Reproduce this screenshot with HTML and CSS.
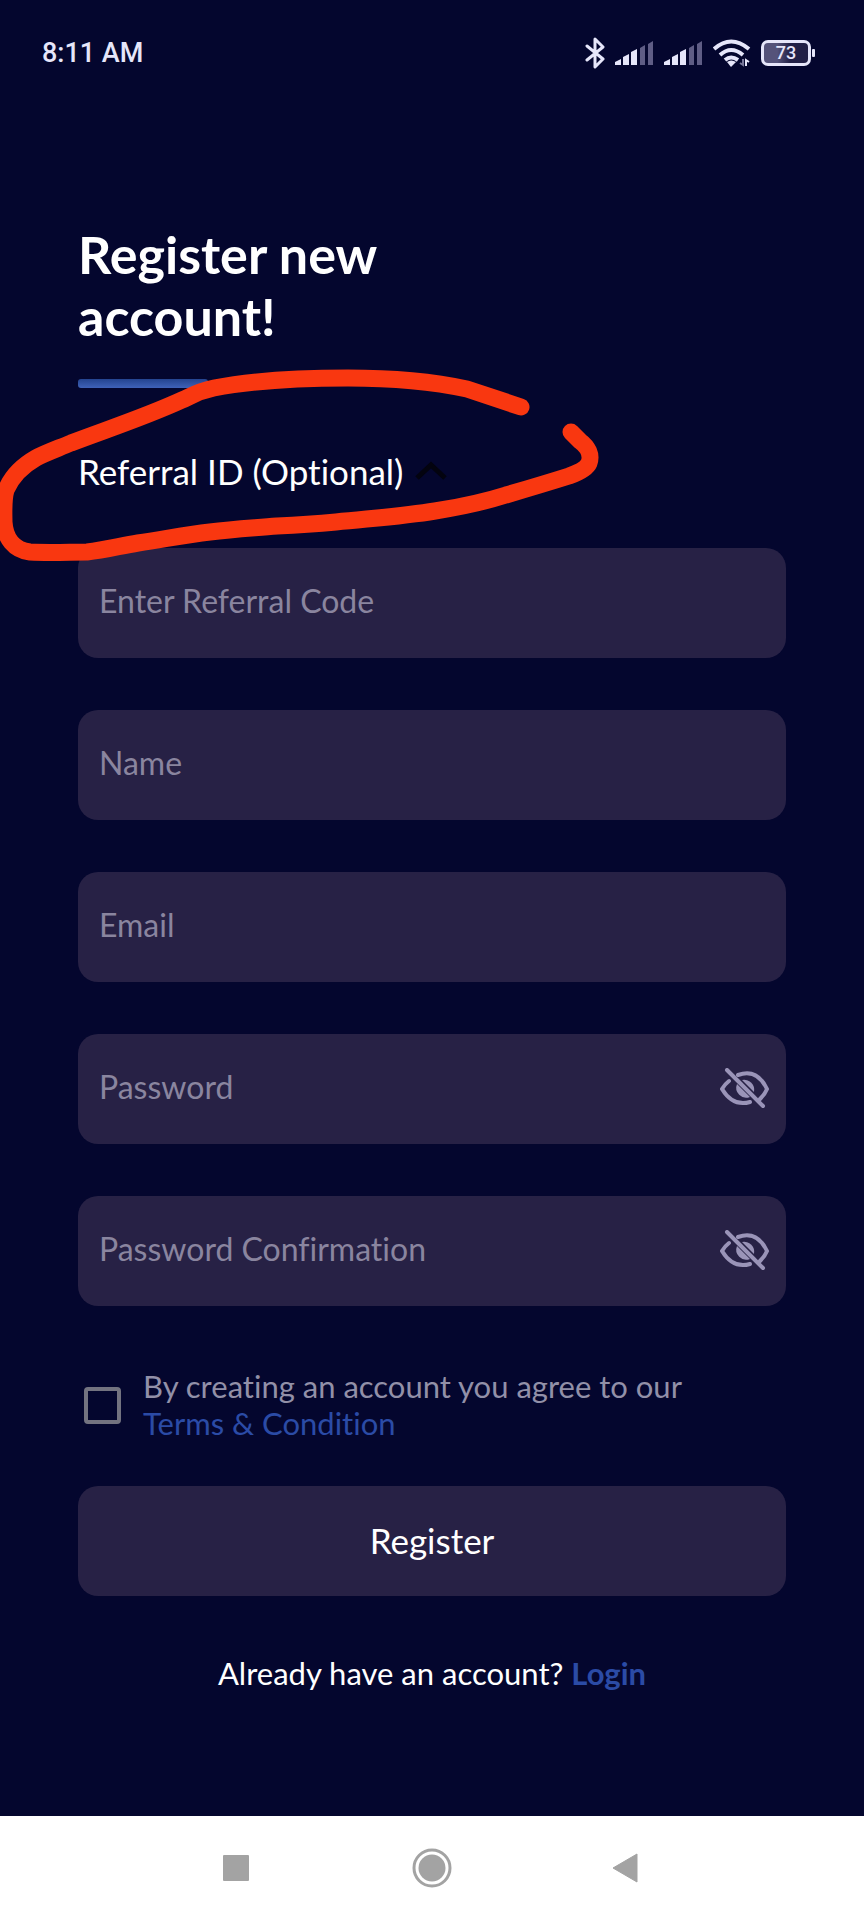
FILE: index.html
```html
<!DOCTYPE html>
<html lang="en">
<head>
    <meta charset="UTF-8">
    <meta name="viewport" content="width=device-width, initial-scale=1.0">
    <title>Register new account</title>
    <link rel="stylesheet" href="styles.css">
</head>
<body>
    <header class="status-bar">
        <span class="time">8:11 AM</span>
        <div class="status-icons">
            <svg width="20" height="32" viewBox="0 0 20 32" fill="none" stroke="#e6e6fa" stroke-width="3" stroke-linejoin="round" stroke-linecap="round">
                <path d="M2 9 L18 22 L10 30 V2 L18 10 L2 23"/>
            </svg>
            <svg width="39" height="26" viewBox="0 0 39 26" fill="#e6e6fa">
                <path d="M0 25 V22 L6 19 V25 Z"/>
                <path d="M8 25 V17 L14 14 V25 Z"/>
                <path d="M16 25 V12 L22 9 V25 Z"/>
                <path class="signal-off" d="M25 25 V8 L30 5 V25 Z M33 25 V4 L38 1 V25 Z"/>
            </svg>
            <svg width="39" height="26" viewBox="0 0 39 26" fill="#e6e6fa">
                <path d="M0 25 V22 L6 19 V25 Z"/>
                <path d="M8 25 V17 L14 14 V25 Z"/>
                <path d="M16 25 V12 L22 9 V25 Z"/>
                <path class="signal-off" d="M25 25 V8 L30 5 V25 Z M33 25 V4 L38 1 V25 Z"/>
            </svg>
            <svg width="38" height="28" viewBox="0 0 38 28" fill="none" stroke="#e6e6fa" stroke-width="4">
                <path d="M1 10 Q18 -5 36 10"/>
                <path d="M7 16 Q18 6 30 16"/>
                <path d="M12 21 Q18 16 25 21"/>
                <path d="M14 23 Q18 20 23 23 L18 28 Z" fill="#e6e6fa" stroke="none"/>
                <path d="M30 20 V26 L27 24" stroke="#77779a" stroke-width="2"/>
                <path d="M33 27 V21 L36 23" stroke-width="2"/>
            </svg>
            <div class="battery"><span>73</span></div>
        </div>
    </header>

    <main class="content">
        <h1>Register new account!</h1>
        <div class="underline"></div>

        <form class="register-form">
            <button type="button" class="referral-toggle">
                Referral ID (Optional)
                <svg width="32" height="20" viewBox="0 0 32 20" fill="none" stroke="#03030f" stroke-width="5">
                    <path d="M2 17 L16 4 L30 17"/>
                </svg>
            </button>

            <div class="field">
                <input type="text" placeholder="Enter Referral Code" aria-label="Referral code">
            </div>
            <div class="field">
                <input type="text" placeholder="Name" aria-label="Name">
            </div>
            <div class="field">
                <input type="email" placeholder="Email" aria-label="Email">
            </div>
            <div class="field">
                <input type="password" placeholder="Password" aria-label="Password">
                <button type="button" class="eye-button" aria-label="Show password">
                    <svg width="50" height="42" viewBox="0 0 50 42" fill="none" stroke="#9a94b8" stroke-width="4" stroke-linecap="round">
                        <path d="M18 7 Q37 0 47 21 Q45 26 40 31"/>
                        <path d="M9 13 Q5 16 2 21 Q13 39 30 34"/>
                        <path d="M22 12 A10 10 0 0 1 34 24 Z" fill="#9a94b8" stroke="none"/>
                        <path d="M17 16 A10 10 0 0 0 30 29 Z" fill="#9a94b8" stroke="none"/>
                        <path d="M7 2 L43 38"/>
                    </svg>
                </button>
            </div>
            <div class="field">
                <input type="password" placeholder="Password Confirmation" aria-label="Password confirmation">
                <button type="button" class="eye-button" aria-label="Show password confirmation">
                    <svg width="50" height="42" viewBox="0 0 50 42" fill="none" stroke="#9a94b8" stroke-width="4" stroke-linecap="round">
                        <path d="M18 7 Q37 0 47 21 Q45 26 40 31"/>
                        <path d="M9 13 Q5 16 2 21 Q13 39 30 34"/>
                        <path d="M22 12 A10 10 0 0 1 34 24 Z" fill="#9a94b8" stroke="none"/>
                        <path d="M17 16 A10 10 0 0 0 30 29 Z" fill="#9a94b8" stroke="none"/>
                        <path d="M7 2 L43 38"/>
                    </svg>
                </button>
            </div>

            <div class="terms">
                <input type="checkbox" id="agree">
                <label for="agree">By creating an account you agree to our <a href="#">Terms &amp; Condition</a></label>
            </div>

            <button type="submit" class="register-button">Register</button>
        </form>

        <p class="login-text">Already have an account? <a href="#">Login</a></p>
    </main>

    <!-- Red marker drawn over the page -->
    <svg class="marker" width="620" height="220" viewBox="0 350 620 220" fill="none" stroke="#f93710" stroke-width="17" stroke-linecap="round" stroke-linejoin="round">
        <path d="M521 407 L467 389 C430 381 390 378 348 378 C300 378 250 381 214 388 C195 392 190 397 182 400 C145 417 105 430 71 443 C54 450 43 454 36 458 C22 466 11 478 6 490 C3 500 4 514 4 522 C5 538 14 550 30 552 C50 553 70 552 87 552 C105 550 120 546 138 543 C165 539 185 535 210 532 C235 529 255 528 277 526 C300 525 315 524 336 522 C375 518 405 516 435 511 C460 507 484 502 506 495 C530 488 550 482 569 476 C580 472 587 468 589 463 C592 455 588 447 580 441 L571 432"/>
    </svg>

    <nav class="nav-bar">
        <button type="button" aria-label="Recent apps">
            <svg width="40" height="40" viewBox="0 0 40 40" fill="#a3a3a3"><rect x="7" y="7" width="26" height="26" rx="1"/></svg>
        </button>
        <button type="button" aria-label="Home">
            <svg width="40" height="40" viewBox="0 0 40 40" fill="#a3a3a3"><circle cx="20" cy="20" r="13.5"/><circle cx="20" cy="20" r="18" fill="none" stroke="#a3a3a3" stroke-width="3"/></svg>
        </button>
        <button type="button" aria-label="Back">
            <svg width="40" height="40" viewBox="0 0 40 40" fill="#a3a3a3"><path d="M5 20 L29 6 V34 Z" stroke="#a3a3a3" stroke-linejoin="round"/></svg>
        </button>
    </nav>
</body>
</html>
```

FILE: styles.css
```css
* {
    box-sizing: border-box;
}

body {
    margin: 0;
    min-height: 100vh;
    display: flex;
    flex-direction: column;
    position: relative;
    background-color: #04062e;
    color: #fff;
    font-family: Lato, Arial, sans-serif;
    font-size: 31px;
    font-variant-ligatures: none;
}

button,
input {
    font-family: inherit;
    font-variant-ligatures: none;
}

button {
    color: inherit;
    background: none;
    border: none;
    padding: 0;
    cursor: pointer;
}

svg {
    display: block;
}

a {
    color: #2b4ba6;
    text-decoration: none;
}

/* Status bar */
.status-bar {
    display: flex;
    justify-content: space-between;
    align-items: center;
    height: 106px;
    padding: 0 48px 0 42px;
    color: #e6e6fa;
    font-family: Roboto, Arial, sans-serif;
}

.time {
    font-size: 27px;
    font-weight: 500;
}

.status-icons {
    display: flex;
    align-items: center;
    gap: 10px;
}

.signal-off {
    fill: #5f5d85;
}

.battery {
    position: relative;
    width: 50px;
    height: 26px;
    margin-right: 5px;
    border: 3px solid #e6e6fa;
    border-radius: 7px;
    background: linear-gradient(to right, #55537a 30%, #222046 60%);
    font-size: 18px;
    font-weight: 500;
    line-height: 20px;
    text-align: center;
}

.battery::after {
    content: "";
    position: absolute;
    top: 6px;
    right: -7px;
    width: 3px;
    height: 8px;
    border-radius: 1px;
    background-color: #e6e6fa;
}

/* Register form */
.content {
    flex: 1;
    padding: 117px 78px 0;
}

h1 {
    max-width: 400px;
    margin: 0;
    font-size: 52px;
    line-height: 62px;
}

.underline {
    width: 130px;
    height: 9px;
    margin-top: 32px;
    border-radius: 3px;
    background: linear-gradient(#24438f, #3f62b8);
}

.register-form {
    display: flex;
    flex-direction: column;
    align-items: stretch;
}

.referral-toggle {
    display: flex;
    align-items: center;
    gap: 12px;
    margin: 63px 0 57px;
    font-size: 35px;
    line-height: 40px;
}

.field {
    display: flex;
    align-items: center;
    height: 110px;
    margin-bottom: 52px;
    padding: 0 16px 0 21px;
    border-radius: 20px;
    background-color: #272145;
}

.field input {
    flex: 1;
    min-width: 0;
    height: 100%;
    padding: 0 0 5px;
    border: none;
    outline: none;
    background: none;
    color: #fff;
    font-size: 32px;
}

.field input::placeholder {
    color: #8a859f;
    opacity: 1;
}

.terms {
    display: flex;
    align-items: center;
    gap: 22px;
    margin: 10px 0 44px;
    padding-left: 6px;
    color: #9290a8;
    line-height: 37px;
}

.terms input {
    appearance: none;
    flex: none;
    width: 37px;
    height: 37px;
    margin: 0;
    border: 4px solid #737380;
    border-radius: 4px;
}

.terms input:checked {
    background-color: #2b4ba6;
}

.terms a {
    display: block;
    width: max-content;
}

.register-button {
    height: 110px;
    padding-bottom: 3px;
    border-radius: 20px;
    background-color: #272145;
    font-size: 35px;
}

.login-text {
    margin: 58px 0;
    line-height: 38px;
    text-align: center;
}

.login-text a {
    font-weight: bold;
}

.marker {
    position: absolute;
    top: 350px;
    left: 0;
    pointer-events: none;
}

/* Navigation bar */
.nav-bar {
    display: flex;
    justify-content: center;
    align-items: center;
    gap: 18%;
    height: 104px;
    background-color: #fff;
}
```
